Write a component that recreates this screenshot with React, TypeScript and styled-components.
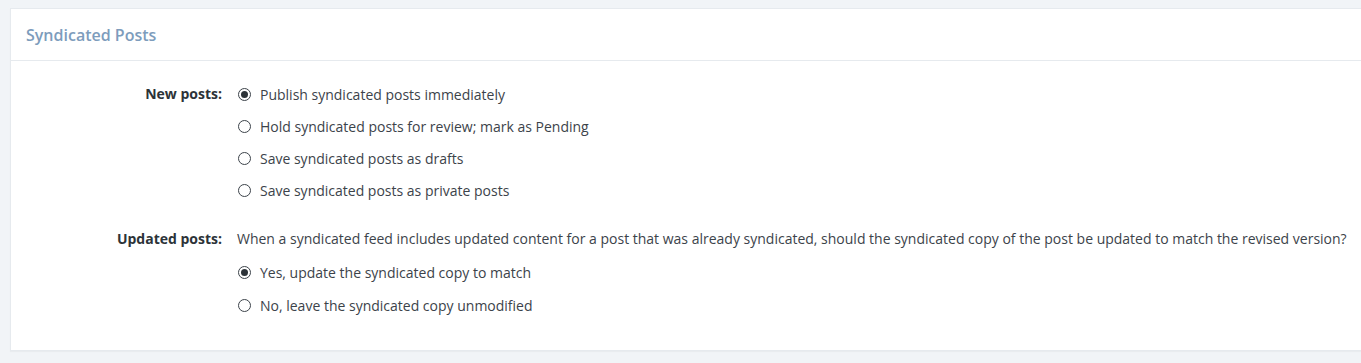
import styled, { createGlobalStyle } from 'styled-components';

const GlobalStyle = createGlobalStyle`
  html, body {
    margin: 0;
    padding: 0;
    background-color: #f1f4f7;
    overflow: hidden;
  }
  body {
    font-family: "Open Sans", "Noto Sans", sans-serif;
    font-size: 14px;
    color: #3c434a;
  }
`;

const Page = styled.div`
  padding: 8px 0 13px 10px;
`;
const Card = styled.section`
  background-color: #ffffff;
  border: 1px solid #e6eaee;
  border-right: none;
  box-shadow: 0 1px 1px rgba(0, 0, 0, 0.03);
`;
const Header = styled.div`
  height: 51px;
  display: flex;
  align-items: center;
  padding: 0 15px;
  border-bottom: 1px solid #e6eaee;
`;
const Title = styled.h2`
  margin: 0;
  font-size: 16px;
  font-weight: 600;
  color: #7d9cbc;
`;
const Body = styled.div`
  padding: 17px 0 29px;
  display: flex;
  flex-direction: column;
  gap: 17px;
`;
const Row = styled.div`
  display: flex;
  gap: 15px;
`;
const Label = styled.div`
  width: 211px;
  flex-shrink: 0;
  text-align: right;
  font-weight: 700;
  color: #2c3338;
  line-height: 32px;
`;
const Field = styled.div<{ $gap?: number }>`
  display: flex;
  flex-direction: column;
  gap: ${(p) => p.$gap ?? 0}px;
`;
const Intro = styled.p`
  margin: 0;
  line-height: 32px;
`;
const Option = styled.label`
  display: flex;
  align-items: center;
  gap: 9px;
  height: 32px;
  cursor: pointer;
`;
const Radio = styled.input.attrs({ type: 'radio' })`
  appearance: none;
  margin: 0 0 0 1px;
  width: 13px;
  height: 13px;
  border: 1px solid #3c434a;
  border-radius: 50%;
  background-color: #ffffff;
  display: grid;
  place-items: center;
  &:checked::before {
    content: '';
    width: 7px;
    height: 7px;
    border-radius: 50%;
    background-color: #2c3338;
  }
`;

type Choice = { value: string; text: string };

const newPosts: Choice[] = [
  { value: 'publish', text: 'Publish syndicated posts immediately' },
  { value: 'pending', text: 'Hold syndicated posts for review; mark as Pending' },
  { value: 'draft', text: 'Save syndicated posts as drafts' },
  { value: 'private', text: 'Save syndicated posts as private posts' },
];
const updatedPosts: Choice[] = [
  { value: 'yes', text: 'Yes, update the syndicated copy to match' },
  { value: 'no', text: 'No, leave the syndicated copy unmodified' },
];

function Choices({ name, items, checked }: { name: string; items: Choice[]; checked: string }) {
  return (
    <>
      {items.map((c) => (
        <Option key={c.value}>
          <Radio name={name} value={c.value} defaultChecked={c.value === checked} />
          {c.text}
        </Option>
      ))}
    </>
  );
}

export default function App() {
  return (
    <Page>
      <GlobalStyle />
      <Card>
        <Header>
          <Title>Syndicated Posts</Title>
        </Header>
        <Body>
          <Row>
            <Label>New posts:</Label>
            <Field>
              <Choices name="feed_post_status" items={newPosts} checked="publish" />
            </Field>
          </Row>
          <Row>
            <Label>Updated posts:</Label>
            <Field $gap={1}>
              <Intro>
                When a syndicated feed includes updated content for a post that was already syndicated, should the
                syndicated copy of the post be updated to match the revised version?
              </Intro>
              <Choices name="freeze_updates" items={updatedPosts} checked="yes" />
            </Field>
          </Row>
        </Body>
      </Card>
    </Page>
  );
}
